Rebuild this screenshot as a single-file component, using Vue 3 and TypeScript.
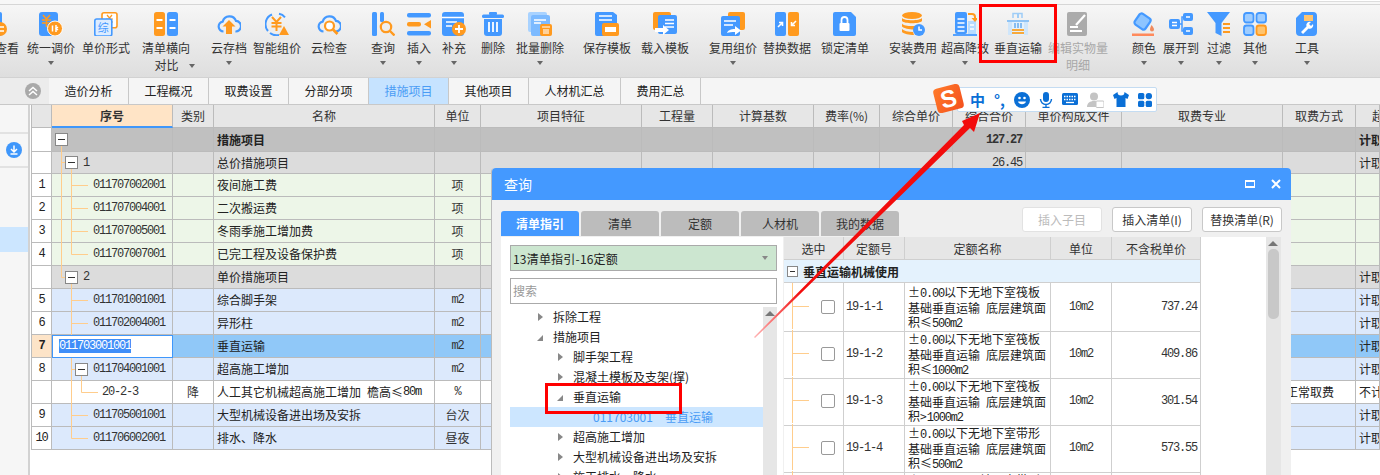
<script setup lang="ts">
const B = '#4499ff'
const O = '#ff9a1f'
const W = '#fff'

const cloud = `<path d="M6.5 19.5a5 5 0 0 1-.8-9.9A7 7 0 0 1 19 8.9a5.3 5.3 0 0 1-.6 10.6" fill="none" stroke="${B}" stroke-width="2.2"/>`

const icons: Record<string, string> = {
  chakan: `<rect width="19" height="24" rx="2" fill="${B}"/><circle cx="17" cy="17" r="7" fill="${O}"/><path d="M13 15h8M13 19h8" stroke="${W}" stroke-width="1.6"/>`,
  tiaojia: `<rect width="19" height="24" rx="3" fill="${B}"/><path d="M4 3l3.5 4L11 3M3 8h9M3 11h9M7.5 7v8" fill="none" stroke="${O}" stroke-width="1.6"/><circle cx="16" cy="16.5" r="7.5" fill="${O}" stroke="${W}"/><path d="M13.5 13.5v6M17 13v7M19 15l-2 1.5 2 1.5" fill="none" stroke="${W}" stroke-width="1.5"/>`,
  danjia: `<rect x="8" y=".8" width="15" height="15" rx="2" fill="${W}" stroke="${O}" stroke-width="1.6"/><path d="M13 3l2.5 3L18 3M12 7h7M12 10h7M15.5 6v6" fill="none" stroke="${O}" stroke-width="1.2"/><rect x=".8" y="7" width="17" height="17" rx="2" fill="#dcecff" stroke="${B}" stroke-width="1.6"/><text x="9.2" y="20" font-size="11" text-anchor="middle" fill="${B}" font-family="Noto Sans CJK SC">综</text>`,
  duibi: `<rect width="11" height="24" rx="2.5" fill="${O}"/><rect x="13" width="11" height="24" rx="2.5" fill="${B}"/><path d="M2.5 8h6M2.5 16h6M15.5 8h6M15.5 16h6" stroke="${W}" stroke-width="2"/>`,
  yuncun: `${cloud}<path d="M12 8l6.5 6.5H15V22H9v-7.5H5.5z" fill="${O}"/>`,
  zhineng: `<path d="M7 2.5A10.5 10.5 0 0 0 3 19M14 1.8a10.5 10.5 0 0 1 6 3.5M5 21a10.5 10.5 0 0 0 9 2" fill="none" stroke="${B}" stroke-width="2"/><path d="M7 5l4.5 5L16 5M6.5 11h10M6.5 14.5h10M11.5 10v9" fill="none" stroke="${O}" stroke-width="2"/><path d="M19 14l5 9H14z" fill="${O}"/>`,
  yunjian: `${cloud}<circle cx="12.5" cy="14" r="4.5" fill="${W}" stroke="${O}" stroke-width="2.2"/><path d="M16 17.5l4.5 4.5" stroke="${O}" stroke-width="2.6"/>`,
  chaxun: `<rect x="1" width="5" height="24" rx="1.5" fill="${B}"/><rect x="9" width="4" height="10" rx="1.5" fill="${B}"/><circle cx="15" cy="15" r="5.2" fill="none" stroke="${O}" stroke-width="2.2"/><path d="M19 19l4.5 4.5" stroke="${O}" stroke-width="2.4"/>`,
  charu: `<rect y="1" width="24" height="4.5" rx="2" fill="${B}"/><rect y="10" width="14" height="4.5" rx="2" fill="${O}"/><path d="M24 8v8.5l-7-4.2z" fill="${O}"/><rect y="19" width="24" height="4.5" rx="2" fill="${B}"/>`,
  bucong: `<rect width="22" height="24" rx="3" fill="${B}"/><path d="M0 5.5h22M4 10h11M4 14h6" stroke="${W}" stroke-width="1.6"/><circle cx="17" cy="17" r="7" fill="${O}"/><path d="M17 13v8M13 17h8" stroke="${W}" stroke-width="1.8"/>`,
  shanchu: `<rect x="1" y="2.5" width="22" height="3.5" rx="1.5" fill="${B}"/><rect x="8" y="0" width="8" height="3" rx="1" fill="${B}"/><path d="M3 7h18v14a3 3 0 0 1-3 3H6a3 3 0 0 1-3-3z" fill="${B}"/><path d="M8 10v10M12 10v10M16 10v10" stroke="${W}" stroke-width="1.8"/>`,
  piliang: `<rect width="19" height="20" rx="2" fill="#a8d2ff"/><rect x="3" y="3" width="19" height="21" rx="2" fill="#7cbaff"/><path d="M6 8h12M6 11h7" stroke="${W}" stroke-width="1.4"/><rect x="12" y="12" width="12" height="12" rx="2" fill="${O}"/><path d="M14 15h8M16 17v5M18 17v5M20 17v5" stroke="${W}" stroke-width="1.1"/>`,
  baocun: `<path d="M2 0h16l4 3v8H9v13H2a2 2 0 0 1-2-2V2a2 2 0 0 1 2-2z" fill="${B}"/><path d="M4 4h13M4 8h13" stroke="${W}" stroke-width="1.6"/><rect x="7" y="11" width="17" height="13" rx="2" fill="${O}"/><rect x="10" y="15" width="11" height="5" fill="${W}"/>`,
  zairu: `<rect width="18" height="18" rx="2" fill="${O}"/><rect x="5" y="3" width="19" height="19" rx="2" fill="${B}"/><path d="M12 8h9M12 11.5h9M12 15h9" stroke="${W}" stroke-width="1.4"/><path d="M2 16h8v-3l6 5-6 5v-3H2z" fill="${W}"/>`,
  fuyong: `<rect x="7" width="17" height="18" rx="2" fill="${O}"/><rect y="4" width="19" height="20" rx="2" fill="${B}"/><path d="M3 9h12M3 13h9" stroke="${W}" stroke-width="1.6"/><path d="M6 21c1-3 4-4 8-4v-3l6 4.5-6 4.5v-3c-3 0-6 0-8 1z" fill="${W}"/>`,
  tihuan: `<rect width="11" height="24" rx="2" fill="${B}"/><rect x="13" width="11" height="24" rx="2" fill="${O}"/><path d="M3 15l4-4M4 10.5h3.500V14M21 9l-4 4M20 13.5h-3.500V10" fill="none" stroke="${W}" stroke-width="1.6"/>`,
  suoding: `<path d="M2 0h16l5 5v17a2 2 0 0 1-2 2H2a2 2 0 0 1-2-2V2a2 2 0 0 1 2-2z" fill="${B}"/><rect x="6.5" y="11" width="10" height="8" rx="1" fill="${W}"/><path d="M8.5 11V8a3 3 0 0 1 6 0v3" fill="none" stroke="${W}" stroke-width="1.8"/>`,
  anzhuang: `<ellipse cx="11" cy="3.5" rx="10" ry="3.5" fill="${O}"/><path d="M1 6c2 3 18 3 20 0v3c-2 3-18 3-20 0zM1 11.5c2 3 12 3 14 2l-2 4c-5 0-10-1-12-3zM1 17c2 2 6 3 11 3l1 3c-5 0-10-1-12-3z" fill="${O}"/><circle cx="18" cy="18" r="6" fill="${B}"/><path d="M18 14.5V18h3" fill="none" stroke="${W}" stroke-width="1.5"/>`,
  chaogao: `<rect x="2" width="12" height="22" rx="2" fill="${B}"/><rect x="15" y="9" width="8" height="13" fill="#b6dbff"/><path d="M4.5 7h7M4.5 11h7M4.5 15h7M4.5 19h7M17 13h4M17 17h4" stroke="${W}" stroke-width="1.5"/><path d="M0 23h24" stroke="${B}" stroke-width="1.8"/><path d="M15 2h4a3 3 0 0 1 3 3v2" fill="none" stroke="${O}" stroke-width="2"/><path d="M18.5 6h7L22 10z" fill="${O}"/>`,
  chuizhi: `<path d="M7 6V1.5h9V6" fill="none" stroke="#9fcdf7" stroke-width="1.5"/><path d="M12 1v5" stroke="#9fcdf7" stroke-width="2"/><path d="M1 8h22v2H1z" fill="#8ec3f5"/><path d="M2 10h4v13H2zM18 10h4v13h-4z" fill="#cfe6fb"/><rect x="6" y="10" width="12" height="13" fill="#e4f1fc"/><path d="M9 11v5M12 11v5M15 11v5" stroke="#6fb0ee" stroke-width="1.6"/><path d="M6 18h12M6 21h12" stroke="#f7a93c" stroke-width="1.8"/>`,
  bianji: `<rect x="1" width="20" height="24" rx="2" fill="#ababab"/><path d="M4 15h8M4 19h12" stroke="${W}" stroke-width="1.8"/><path d="M10 13L19 3" stroke="${W}" stroke-width="2.2"/>`,
  yanse: `<rect x="4" y="3" width="13" height="13" rx="2.5" transform="rotate(35 10.5 9.500)" fill="#8cc4ff" stroke="${B}" stroke-width="2.2"/><path d="M19.5 13c1.500 2 2.500 3.200 2.500 4.500a2 2 0 0 1-4 0c0-1.300.8-3 1.500-4.500z" fill="#f08a5d"/><rect x="0" y="21.5" width="22" height="2.5" fill="#ff8a5c"/>`,
  zhankai: `<rect y="7" width="11" height="10" rx="2" fill="${B}"/><rect x="14" y="1" width="10" height="8" rx="2" fill="${B}"/><rect x="14" y="15" width="10" height="8" rx="2" fill="${B}"/><path d="M11 12h2V5h1M13 12v7h1" fill="none" stroke="${B}" stroke-width="1.5"/><path d="M3 10.5h5M3 13.5h5M17 5h4M17 19h4" stroke="${W}" stroke-width="1.4"/>`,
  guolv: `<path d="M0 0h23l-8.5 11v13L8.5 21V11z" fill="${B}"/><path d="M16 12h7M16 16h7M16 20h7" stroke="${O}" stroke-width="1.8"/>`,
  qita: `<rect x="1" y="1" width="9.5" height="9.5" rx="2.5" fill="#9fcdff" stroke="${B}" stroke-width="1.8"/><rect x="13.5" y="1" width="9.5" height="9.5" rx="2.5" fill="#9fcdff" stroke="${B}" stroke-width="1.8"/><rect x="1" y="13.5" width="9.5" height="9.5" rx="2.5" fill="#9fcdff" stroke="${B}" stroke-width="1.8"/><rect x="13.5" y="13.5" width="9.5" height="9.5" rx="2.5" fill="#ffc46e" stroke="${O}" stroke-width="1.8"/>`,
  gongju: `<path d="M7 0h11a4 4 0 0 1 4 4v16a4 4 0 0 1-4 4H5a4 4 0 0 1-4-4V6z" fill="${B}"/><path d="M9 3h9v6H9z" fill="#ffc46e"/><path d="M16 10a3.500 3.500 0 0 0-4.500 4.500L6 20l2 2 5.500-5.500A3.500 3.500 0 0 0 18 12l-2 2-2-2z" fill="${W}"/>`,
}

interface Tool {
  icon: string
  label: string
  line2?: string
  width: number
  gap: number
  arrow?: boolean
  off?: boolean
}

const tools: Tool[] = [
  { icon: 'chakan', label: '单价查看', width: 48, gap: -29 },
  { icon: 'tiaojia', label: '统一调价', width: 48, gap: 8, arrow: true },
  { icon: 'danjia', label: '单价形式', width: 48, gap: 7 },
  { icon: 'duibi', label: '清单横向', line2: '对比', width: 48, gap: 12, arrow: true },
  { icon: 'yuncun', label: '云存档', width: 36, gap: 21, arrow: true },
  { icon: 'zhineng', label: '智能组价', width: 48, gap: 6 },
  { icon: 'yunjian', label: '云检查', width: 36, gap: 10 },
  { icon: 'chaxun', label: '查询', width: 24, gap: 24, arrow: true },
  { icon: 'charu', label: '插入', width: 24, gap: 12, arrow: true },
  { icon: 'bucong', label: '补充', width: 24, gap: 11, arrow: true },
  { icon: 'shanchu', label: '删除', width: 24, gap: 15 },
  { icon: 'piliang', label: '批量删除', width: 48, gap: 11, arrow: true },
  { icon: 'baocun', label: '保存模板', width: 48, gap: 19 },
  { icon: 'zairu', label: '载入模板', width: 48, gap: 10 },
  { icon: 'fuyong', label: '复用组价', width: 48, gap: 20, arrow: true },
  { icon: 'tihuan', label: '替换数据', width: 48, gap: 6 },
  { icon: 'suoding', label: '锁定清单', width: 48, gap: 10 },
  { icon: 'anzhuang', label: '安装费用', width: 48, gap: 20, arrow: true },
  { icon: 'chaogao', label: '超高降效', width: 48, gap: 4, arrow: true },
  { icon: 'chuizhi', label: '垂直运输', width: 48, gap: 5 },
  { icon: 'bianji', label: '编辑实物量', line2: '明细', width: 60, gap: 6, off: true },
  { icon: 'yanse', label: '颜色', width: 24, gap: 24, arrow: true },
  { icon: 'zhankai', label: '展开到', width: 36, gap: 7, arrow: true },
  { icon: 'guolv', label: '过滤', width: 24, gap: 8, arrow: true },
  { icon: 'qita', label: '其他', width: 24, gap: 12, arrow: true },
  { icon: 'gongju', label: '工具', width: 24, gap: 28, arrow: true },
]

const tabs = [
  { label: '造价分析', width: 80 },
  { label: '工程概况', width: 80 },
  { label: '取费设置', width: 80 },
  { label: '分部分项', width: 80 },
  { label: '措施项目', width: 80, active: true },
  { label: '其他项目', width: 80 },
  { label: '人材机汇总', width: 92 },
  { label: '费用汇总', width: 80 },
]

const headers = ['', '序号', '类别', '名称', '单位', '项目特征', '工程量', '计算基数', '费率(%)', '综合单价', '综合合价', '单价构成文件', '取费专业', '取费方式', '超']

interface Row {
  tone: string
  no?: string
  code?: string
  pad: number
  box?: boolean
  kind?: string
  name: string
  tail?: string
  unit?: string
  latin?: boolean
  total?: string
  way?: string
  last?: string
}

const rows: Row[] = [
  { tone: 'top', pad: 3, box: true, name: '措施项目', total: '127.27', last: '计取' },
  { tone: 'sub', code: '1', pad: 13, box: true, name: '总价措施项目', total: '26.45', last: '计取' },
  { tone: 'green', no: '1', code: '011707002001', pad: 41, name: '夜间施工费', unit: '项' },
  { tone: 'green', no: '2', code: '011707004001', pad: 41, name: '二次搬运费', unit: '项' },
  { tone: 'green', no: '3', code: '011707005001', pad: 41, name: '冬雨季施工增加费', unit: '项' },
  { tone: 'green', no: '4', code: '011707007001', pad: 41, name: '已完工程及设备保护费', unit: '项' },
  { tone: 'sub', code: '2', pad: 13, box: true, name: '单价措施项目', last: '计取' },
  { tone: 'blue', no: '5', code: '011701001001', pad: 41, name: '综合脚手架', unit: 'm2', latin: true, last: '计取' },
  { tone: 'blue', no: '6', code: '011702004001', pad: 41, name: '异形柱', unit: 'm2', latin: true, last: '计取' },
  { tone: 'sel', no: '7', code: '011703001001', pad: 41, name: '垂直运输', unit: 'm2', latin: true, last: '计取' },
  { tone: 'blue', no: '8', code: '011704001001', pad: 23, box: true, name: '超高施工增加', unit: 'm2', latin: true, last: '计取' },
  { tone: 'white', code: '20-2-3', pad: 50, kind: '降', name: '人工其它机械超高施工增加\u2002檐高≤', tail: '80m', unit: '%', latin: true, way: '正常取费', last: '不计' },
  { tone: 'blue', no: '9', code: '011705001001', pad: 41, name: '大型机械设备进出场及安拆', unit: '台次', last: '计取' },
  { tone: 'blue', no: '10', code: '011706002001', pad: 41, name: '排水、降水', unit: '昼夜', last: '计取' },
]

const dialogTabs = ['清单指引', '清单', '定额', '人材机', '我的数据']

const treeRows = [
  { label: '拆除工程', pad: 43, tri: 'closed' },
  { label: '措施项目', pad: 43, tri: 'open' },
  { label: '脚手架工程', pad: 63, tri: 'closed' },
  { label: '混凝土模板及支架(撑)', pad: 63, tri: 'closed' },
  { label: '垂直运输', pad: 63, tri: 'open' },
  { label: '011703001\u2002\u2002垂直运输', pad: 83, tri: '', picked: true },
  { label: '超高施工增加', pad: 63, tri: 'closed' },
  { label: '大型机械设备进出场及安拆', pad: 63, tri: 'closed' },
  { label: '施工排水、降水', pad: 63, tri: 'closed' },
]

const quotaHeaders = ['选中', '定额号', '定额名称', '单位', '不含税单价']

const quotas = [
  { code: '19-1-1', kind: '筏板', limit: '≤', area: '500m2', price: '737.24' },
  { code: '19-1-2', kind: '筏板', limit: '≤', area: '1000m2', price: '409.86' },
  { code: '19-1-3', kind: '筏板', limit: '>', area: '1000m2', price: '301.54' },
  { code: '19-1-4', kind: '带形', limit: '≤', area: '500m2', price: '573.55' },
  { code: '19-1-5', kind: '带形', limit: '≤', area: '1000m2', price: '318.64' },
]
</script>

<template>
  <div class="page">
    <div class="topstrip"><div class="topfield" /></div>

    <div class="toolbar">
      <div
        v-for="t in tools"
        :key="t.icon"
        class="tool"
        :class="{ off: t.off }"
        :style="{ width: t.width + 'px', marginLeft: t.gap + 'px' }"
      >
        <svg class="tool-icon" width="24" height="24" viewBox="0 0 24 24" v-html="icons[t.icon]" />
        <div class="tool-label">{{ t.label }}</div>
        <div v-if="t.line2" class="tool-label">
          {{ t.line2 }}<i v-if="t.arrow" class="caret inline" />
        </div>
        <i v-else-if="t.arrow" class="caret" />
      </div>
    </div>

    <div class="tabbar">
      <div class="tab-lead">
        <svg width="16" height="16" viewBox="0 0 16 16">
          <circle cx="8" cy="8" r="8" fill="#a9a9a9" />
          <path d="M4 8l4-3.5L12 8M4 12l4-3.5L12 12" fill="none" stroke="#fff" stroke-width="1.5" />
        </svg>
      </div>
      <div
        v-for="t in tabs"
        :key="t.label"
        class="tab"
        :class="{ active: t.active }"
        :style="{ width: t.width + 'px' }"
      >
        {{ t.label }}
      </div>
    </div>

    <div class="main">
      <aside class="side">
        <div class="side-top" />
        <div class="side-btn">
          <svg width="16" height="16" viewBox="0 0 16 16">
            <circle cx="8" cy="8" r="8" fill="#3f97fb" />
            <path d="M8 3.5v6M5 7l3 3 3-3M4.5 12h7" fill="none" stroke="#fff" stroke-width="1.5" />
          </svg>
        </div>
        <div class="side-gap" />
        <div class="side-pick" />
      </aside>

      <div class="grid">
        <div class="row head">
          <div
            v-for="(h, i) in headers"
            :key="i"
            class="cell"
            :class="{ 'head-pick': i === 1, 'head-last': i === headers.length - 1 }"
          >
            {{ h }}
          </div>
        </div>
        <div v-for="(r, i) in rows" :key="i" class="row" :class="r.tone">
          <div class="cell rowno num">{{ r.no }}</div>
          <div class="cell tree" :style="{ paddingLeft: r.pad + 'px' }">
            <span v-if="r.tone === 'sel'" class="editor"><span class="num picked">{{ r.code }}</span></span>
            <template v-else>
              <span v-if="r.box" class="expander" />
              <span class="num">{{ r.code }}</span>
            </template>
          </div>
          <div class="cell center">{{ r.kind }}</div>
          <div class="cell name">{{ r.name }}<span v-if="r.tail" class="num">{{ r.tail }}</span></div>
          <div class="cell center" :class="{ num: r.latin }">{{ r.unit }}</div>
          <div v-for="n in 5" :key="n" class="cell" />
          <div class="cell right num">{{ r.total }}</div>
          <div class="cell" />
          <div class="cell" />
          <div class="cell name">{{ r.way }}</div>
          <div class="cell name">{{ r.last }}</div>
        </div>

        <svg class="tree-lines" width="121" height="322" viewBox="52 128 121 322">
          <path
            d="M61.5 146V277.5H65M61.5 162.5H65M71.5 169V254.5H88M72 185.5H88M72 208.5H88M72 231.5H88M71.5 284V335M72 300.5H88M72 323.5H88M71.5 358V438.5H88M72 369.5H75M72 415.5H88M81.5 376V392.5H98"
            fill="none"
            stroke="#ffcd8c"
          />
        </svg>
      </div>
    </div>

    <section class="dialog">
      <header class="dialog-head">
        <span>查询</span>
        <span class="dialog-ctrl">
          <i class="ctrl-max" />
          <svg width="12" height="12" viewBox="0 0 12 12">
            <path d="M2 2l8 8M10 2l-8 8" stroke="#fff" stroke-width="2" />
          </svg>
        </span>
      </header>
      <div class="dialog-bar">
        <div class="dtabs">
          <div v-for="(t, i) in dialogTabs" :key="t" class="dtab" :class="{ active: i === 0 }">{{ t }}</div>
        </div>
        <div class="dbtns">
          <button type="button" class="dbtn" disabled>插入子目</button>
          <button type="button" class="dbtn">插入清单(I)</button>
          <button type="button" class="dbtn">替换清单(R)</button>
        </div>
      </div>
      <div class="panels">
        <div class="left-panel">
          <div class="selector">13清单指引-16定额<i class="caret" /></div>
          <div class="search">搜索</div>
          <div class="tree-box">
            <div class="tree-list">
              <div
                v-for="n in treeRows"
                :key="n.label"
                class="tnode"
                :class="{ picked: n.picked }"
                :style="{ paddingLeft: n.pad + 'px' }"
              ><i v-if="n.tri" class="tri" :class="n.tri" />{{ n.label }}</div>
            </div>
            <div class="vscroll"><i class="up" /></div>
          </div>
        </div>
        <div class="right-panel">
          <div class="qtable">
            <div class="qrow qhead">
              <div v-for="h in quotaHeaders" :key="h" class="qcell">{{ h }}</div>
            </div>
            <div class="qgroup"><span class="expander" />垂直运输机械使用</div>
            <div v-for="q in quotas" :key="q.code" class="qrow qbody">
              <div class="qcell qcheck"><i class="qline" /><i class="check" /></div>
              <div class="qcell qcode num">{{ q.code }}</div>
              <div class="qcell qname">
                <div><span class="pm">±</span><span class="num">0.00</span>以下无地下室{{ q.kind }}</div>
                <div>基础垂直运输&#8194;底层建筑面</div>
                <div>积{{ q.limit }}<span class="num">{{ q.area }}</span></div>
              </div>
              <div class="qcell num">10m2</div>
              <div class="qcell qprice num">{{ q.price }}</div>
            </div>
          </div>
          <div class="qfill" />
          <div class="vscroll wide"><i class="up" /><i class="thumb" /></div>
        </div>
      </div>
    </section>

    <!-- annotations drawn on top of the screenshot -->
    <div class="mark mark-tool" />
    <div class="mark mark-tree" />
    <svg class="arrow" width="1380" height="475" viewBox="0 0 1380 475">
      <defs>
        <linearGradient id="tail" gradientUnits="userSpaceOnUse" x1="754" y1="337" x2="800" y2="291">
          <stop offset="0" stop-color="#ffb4b4" />
          <stop offset="1" stop-color="#f20c0c" />
        </linearGradient>
      </defs>
      <path d="M754 337L964 125L962 121L980 113L974 132L970 128L755 338z" fill="url(#tail)" />
    </svg>

    <div class="ime">
      <span class="ime-logo">S</span>
      <span class="ime-zh">中</span>
      <span class="ime-punct">°,</span>
      <svg width="16" height="16" viewBox="0 0 16 16"><circle cx="8" cy="8" r="8" fill="#0a6fd6" /><circle cx="5.5" cy="6" r="1.3" fill="#fff" /><circle cx="10.5" cy="6" r="1.3" fill="#fff" /><path d="M4 9.5c1 3.500 7 3.500 8 0z" fill="#fff" /></svg>
      <svg width="14" height="16" viewBox="0 0 14 16"><rect x="4" width="6" height="10" rx="3" fill="#0a6fd6" /><path d="M1.5 7a5.500 5.500 0 0 0 11 0M7 12.5V15M3.5 15.5h7" fill="none" stroke="#0a6fd6" stroke-width="1.4" /></svg>
      <svg width="16" height="13" viewBox="0 0 16 13"><rect width="16" height="12" rx="1.5" fill="#0a6fd6" /><path d="M2 3.5h12M2 6.5h12" stroke="#fff" stroke-width="1.3" stroke-dasharray="1.5 1" /><path d="M4 9.5h8" stroke="#fff" stroke-width="1.3" /></svg>
      <svg width="17" height="16" viewBox="0 0 17 16"><circle cx="7" cy="4.5" r="4" fill="#c4c4c4" /><path d="M0 15c0-4 3-6 7-6s5 2 5 6z" fill="#c4c4c4" /><rect x="9" y="9" width="8" height="6.5" rx="1" fill="#fff" stroke="#c4c4c4" /></svg>
      <svg width="16" height="15" viewBox="0 0 16 15"><path d="M4.5 0L0 3l1.500 4L3.500 6v9h9V6l2 1L16 3l-4.500-3a3.500 3.500 0 0 1-7 0z" fill="#0a6fd6" /></svg>
      <svg width="14" height="14" viewBox="0 0 14 14"><rect width="6.3" height="6.3" rx="1.5" fill="#0a6fd6" /><rect x="7.7" width="6.3" height="6.3" rx="3" fill="#0a6fd6" /><rect y="7.7" width="6.3" height="6.3" rx="1.5" fill="#0a6fd6" /><rect x="7.7" y="7.7" width="6.3" height="6.3" rx="1.5" fill="#0a6fd6" /></svg>
    </div>
  </div>
</template>

<style>
html,
body {
  margin: 0;
  background: #fff;
}
</style>

<style scoped>
.page {
  position: relative;
  display: flex;
  flex-direction: column;
  width: 1380px;
  height: 475px;
  overflow: hidden;
  font-family: "Noto Sans CJK SC", "Liberation Sans", sans-serif;
  font-size: 12px;
  color: #333;
  background: #fff;
}

.num {
  font-family: "Liberation Mono", "Noto Sans CJK SC", monospace;
  font-size: 12px;
  letter-spacing: -1.2px;
}

.pm {
  display: inline-block;
  width: 12px;
  text-align: center;
}

.topstrip {
  display: flex;
  justify-content: flex-end;
  flex-shrink: 0;
  height: 4px;
  background: #f7f7f7;
  border-bottom: 1px solid #d6d6d6;
}

.topfield {
  width: 140px;
  height: 1px;
  background: #fff;
  border-bottom: 1px solid #ddd;
}

.toolbar {
  display: flex;
  flex-shrink: 0;
  height: 73px;
  box-sizing: border-box;
  padding-top: 7px;
  background: linear-gradient(#f6f6f6, #dedede);
  border-bottom: 1px solid #d2d2d2;
}

.tool {
  display: flex;
  flex-direction: column;
  align-items: center;
  flex-shrink: 0;
  white-space: nowrap;
}

.tool-icon {
  flex-shrink: 0;
}

.tool-label {
  height: 17px;
  margin-top: 3px;
  line-height: 17px;
}

.tool-label + .tool-label {
  margin-top: 0;
}

.tool.off .tool-label {
  color: #a8a8a8;
}

.caret {
  display: block;
  width: 0;
  height: 0;
  margin-top: 5px;
  border-top: 4px solid #666;
  border-left: 3.5px solid transparent;
  border-right: 3.5px solid transparent;
}

.caret.inline {
  display: inline-block;
  margin: 0 -17px 2px 10px;
}

.tabbar {
  display: flex;
  flex-shrink: 0;
  height: 27px;
  box-sizing: border-box;
  background: #f5f5f5;
  border-bottom: 1px solid #c8c8c8;
}

.tab-lead {
  display: flex;
  align-items: center;
  justify-content: flex-end;
  box-sizing: border-box;
  width: 49px;
  padding-right: 8px;
  background: #ececec;
}

.tab {
  box-sizing: border-box;
  line-height: 26px;
  text-align: center;
  border-right: 1px solid #c8c8c8;
  color: #222;
}

.tab.active {
  color: #4a9cf5;
  background: #c6e3ff;
}

.main {
  display: flex;
  flex: 1;
  min-height: 0;
}

.side {
  flex-shrink: 0;
  width: 28px;
  margin-right: 1px;
  background: #f6f6f6;
  border-right: 2px solid #d2d2d2;
}

.side-top {
  height: 27px;
  border-bottom: 2px solid #e2e2e2;
}

.side-btn {
  display: flex;
  align-items: center;
  justify-content: center;
  height: 32px;
  border-bottom: 2px solid #e2e2e2;
}

.side-gap {
  height: 59px;
}

.side-pick {
  height: 25px;
  background: #cce6ff;
}

.grid {
  position: relative;
  flex: 1;
  min-width: 0;
  align-self: flex-start;
  border-left: 1px solid #bbb;
}

.row {
  display: grid;
  grid-template-columns: 20px 121px 41px 221px 46px 161px 71px 101px 66px 73px 73px 96px 161px 73px 1fr;
  height: 23px;
  line-height: 22px;
}

.cell {
  display: flex;
  align-items: center;
  box-sizing: border-box;
  min-width: 0;
  overflow: hidden;
  white-space: nowrap;
  border-right: 1px solid #bbb;
  border-bottom: 1px solid #bbb;
}

.head {
  background: #e6e6e6;
}

.head .cell {
  justify-content: center;
}

.head .head-pick {
  font-weight: 700;
  background: #ffe4c6;
  border-bottom: 2px solid #3f97fb;
}

.head .head-last {
  justify-content: flex-start;
  padding-left: 16px;
}

.rowno {
  justify-content: center;
  background: #fff;
  color: #222;
}

.center {
  justify-content: center;
}

.right {
  justify-content: flex-end;
  padding-right: 3px;
}

.name {
  padding-left: 3px;
  color: #222;
}

.tree {
  position: relative;
}

.top {
  height: 24px;
  background: #c0c0c0;
  font-weight: 700;
}

.top + .sub {
  height: 22px;
}

.sub {
  background: #dcdcdc;
}

.green {
  background: #edf6e8;
}

.blue {
  background: #dce9fc;
}

.sel {
  background: #90c8f8;
}

.white {
  background: #fff;
}

.sel .rowno {
  font-weight: 700;
  background: #fde4c8;
}

.sel .tree {
  align-items: stretch;
  padding-left: 0 !important;
  background: #fff;
  border: 1px solid #3f97fb;
  z-index: 1;
}

.editor {
  padding: 1px 0 0 6px;
  line-height: 14px;
}

.picked.num {
  display: inline-block;
  color: #fff;
  background: #3f8ef8;
}

.expander {
  position: relative;
  flex-shrink: 0;
  box-sizing: border-box;
  width: 13px;
  height: 13px;
  margin-right: 5px;
  background: #fff;
  border: 1px solid #888;
}

.expander::after {
  content: "";
  position: absolute;
  left: 2px;
  right: 2px;
  top: 5px;
  height: 1px;
  background: #333;
}

.tree-lines {
  position: absolute;
  left: 20px;
  top: 23px;
  pointer-events: none;
}

.dialog {
  position: absolute;
  left: 491px;
  top: 168px;
  z-index: 2;
  box-sizing: border-box;
  width: 800px;
  height: 320px;
  background: #f0f0f0;
  border-left: 1px solid #bbb;
  border-radius: 4px 4px 0 0;
}

.dialog-head {
  display: flex;
  align-items: center;
  justify-content: space-between;
  height: 32px;
  padding: 0 9px 0 12px;
  font-size: 14px;
  color: #fff;
  background: #4499ff;
  border-radius: 4px 4px 0 0;
}

.dialog-ctrl {
  display: flex;
  align-items: center;
  gap: 15px;
}

.ctrl-max {
  display: block;
  box-sizing: border-box;
  width: 10px;
  height: 8px;
  border: 2px solid #fff;
  border-left-width: 1.5px;
  border-right-width: 1.5px;
}

.dialog-bar {
  display: flex;
  justify-content: space-between;
  height: 37px;
  padding: 0 9px;
}

.dtabs {
  display: flex;
  gap: 2px;
  padding-top: 11px;
}

.dtab {
  width: 78px;
  height: 25px;
  line-height: 25px;
  text-align: center;
  background: #bcbcbc;
  border-radius: 3px 3px 0 0;
}

.dtab.active {
  font-weight: 700;
  color: #fff;
  background: #4499ff;
}

.dbtns {
  display: flex;
  gap: 10px;
  padding-top: 7px;
}

.dbtn {
  box-sizing: border-box;
  width: 80px;
  height: 25px;
  padding: 0;
  font: inherit;
  color: #333;
  background: #fff;
  border: 1px solid #c8c8c8;
  border-radius: 3px;
}

.dbtn:disabled {
  color: #bbb;
  border-color: #e2e2e2;
}

.panels {
  display: flex;
  gap: 1px;
  padding-left: 9px;
}

.left-panel {
  box-sizing: border-box;
  width: 282px;
  height: 260px;
  padding: 8px 6px 0 9px;
  background: #fff;
}

.selector {
  display: flex;
  align-items: center;
  justify-content: space-between;
  box-sizing: border-box;
  height: 26px;
  padding: 0 8px 0 2px;
  font-size: 12px;
  letter-spacing: 0.2px;
  color: #222;
  background: #cce6d0;
  border: 1px solid #aaa;
}

.selector .caret {
  margin: 0;
  border-top-color: #888;
}

.search {
  box-sizing: border-box;
  height: 26px;
  margin-top: 7px;
  padding-left: 2px;
  line-height: 24px;
  color: #999;
  border: 1px solid #aaa;
}

.tree-box {
  display: flex;
  margin-top: 3px;
}

.tree-list {
  flex: 1;
}

.tnode {
  position: relative;
  height: 20px;
  line-height: 20px;
  white-space: pre;
  color: #222;
}

.tnode.picked {
  color: #4a9cf5;
  background: #cce6ff;
}

.tri {
  position: absolute;
  top: 6px;
  margin-left: -15px;
  width: 0;
  height: 0;
}

.tri.closed {
  border-left: 5px solid #888;
  border-top: 4px solid transparent;
  border-bottom: 4px solid transparent;
}

.tri.open {
  top: 8px;
  margin-left: -16px;
  border-bottom: 6px solid #888;
  border-left: 6px solid transparent;
}

.vscroll {
  position: relative;
  flex-shrink: 0;
  width: 14px;
  height: 170px;
  background: #e6e6e6;
}

.up {
  position: absolute;
  left: 2px;
  top: 4px;
  width: 0;
  height: 0;
  border-bottom: 5px solid #777;
  border-left: 5px solid transparent;
  border-right: 5px solid transparent;
}

.vscroll.wide {
  width: 15px;
  height: 240px;
}

.thumb {
  position: absolute;
  left: 2px;
  top: 12px;
  width: 11px;
  height: 70px;
  background: #c8c8c8;
  border-radius: 5px;
}

.right-panel {
  display: flex;
  width: 497px;
  height: 260px;
  background: #fff;
}

.qtable {
  flex-shrink: 0;
  width: 417px;
}

.qfill {
  flex: 1;
}

.qrow {
  display: grid;
  grid-template-columns: 60px 61px 146px 61px 89px;
}

.qcell {
  display: flex;
  align-items: center;
  justify-content: center;
  box-sizing: border-box;
  min-width: 0;
  border-right: 1px solid #cfcfcf;
  border-bottom: 1px solid #cfcfcf;
}

.qhead {
  height: 23px;
  background: #e6e6e6;
}

.qgroup {
  display: flex;
  align-items: center;
  box-sizing: border-box;
  height: 23px;
  padding-left: 3px;
  font-weight: 700;
  color: #222;
  background: #e4f2fd;
  border-right: 1px solid #cfcfcf;
  border-bottom: 1px solid #cfcfcf;
}

.qgroup .expander {
  width: 11px;
  height: 11px;
  margin-right: 5px;
}

.qgroup .expander::after {
  top: 4px;
}

.qbody {
  height: 47px;
}

.qcheck {
  position: relative;
}

.qline {
  position: absolute;
  left: 8px;
  top: 0;
  width: 16px;
  height: 23px;
  border-left: 1px solid #ffcd8c;
  border-bottom: 1px solid #ffcd8c;
}

.qline::after {
  content: "";
  position: absolute;
  left: -1px;
  top: 23px;
  height: 23px;
  border-left: 1px solid #ffcd8c;
}

.check {
  box-sizing: border-box;
  width: 14px;
  height: 14px;
  margin-left: 28px;
  background: #fff;
  border: 1px solid #999;
  border-radius: 2px;
}

.qcode {
  justify-content: flex-start;
  padding-left: 2px;
}

.qname {
  display: block;
  padding: 2px 0 0 3px;
  line-height: 14px;
  white-space: nowrap;
  color: #222;
}

.qprice {
  justify-content: flex-end;
  padding-right: 3px;
}

.mark {
  position: absolute;
  z-index: 3;
  box-sizing: border-box;
  border: 3px solid #f00;
  pointer-events: none;
}

.mark-tool {
  left: 979px;
  top: 4px;
  width: 78px;
  height: 59px;
}

.mark-tree {
  left: 545px;
  top: 383px;
  width: 137px;
  height: 31px;
}

.arrow {
  position: absolute;
  left: 0;
  top: 0;
  z-index: 3;
  pointer-events: none;
}

.ime {
  position: absolute;
  left: 957px;
  top: 87px;
  z-index: 4;
  display: flex;
  align-items: center;
  justify-content: space-between;
  box-sizing: border-box;
  width: 200px;
  height: 25px;
  padding: 0 4px 0 12px;
  background: #fff;
  border: 1px solid #c4dcf2;
  border-radius: 2px;
}

.ime-logo {
  position: absolute;
  left: -23px;
  top: -2px;
  width: 27px;
  height: 25px;
  line-height: 25px;
  text-align: center;
  font-family: "Liberation Sans", sans-serif;
  font-size: 24px;
  font-weight: 700;
  color: #fff;
  background: linear-gradient(135deg, #ff7a2a, #f4511e);
  border-radius: 4px;
  transform: rotate(-14deg);
}

.ime-zh {
  font-size: 15px;
  font-weight: 700;
  color: #0a6fd6;
}

.ime-punct {
  font-size: 15px;
  font-weight: 700;
  line-height: 15px;
  color: #0a6fd6;
}
</style>
